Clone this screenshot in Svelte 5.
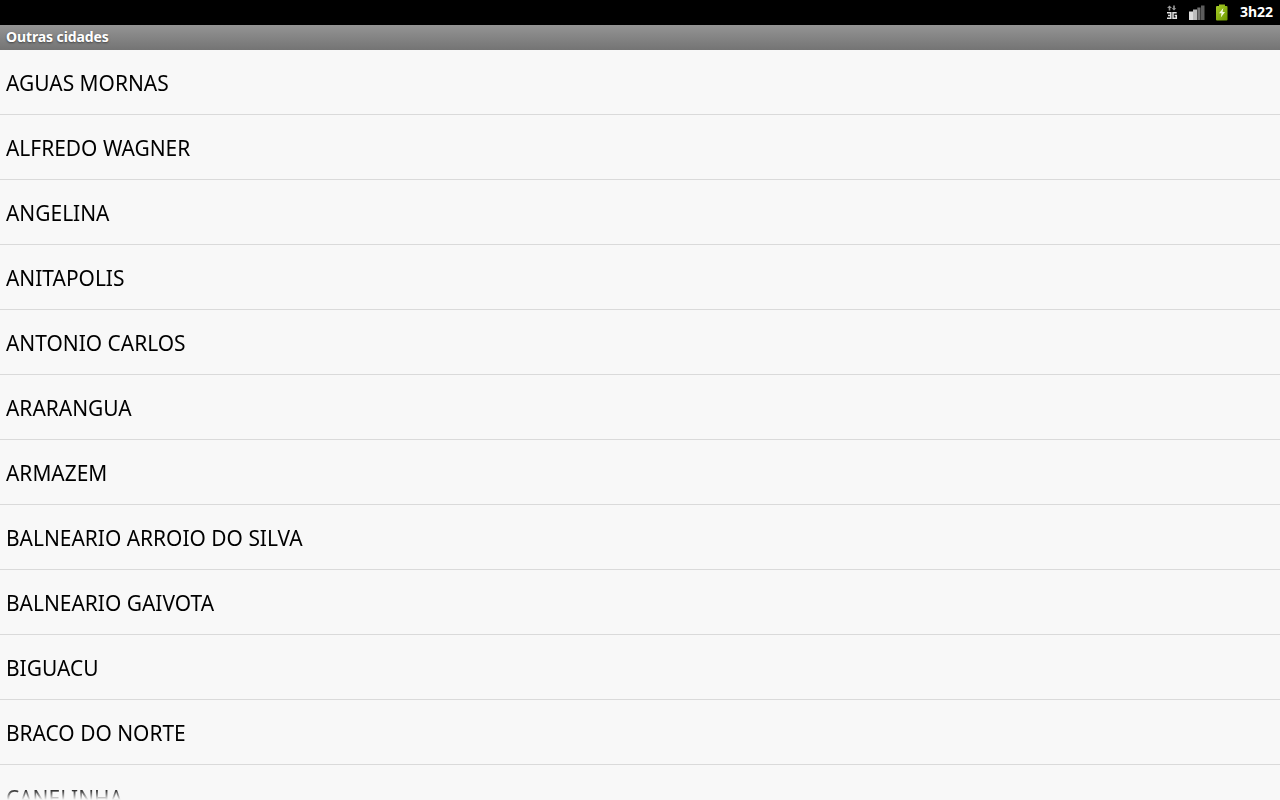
<script lang="ts">
	const cities: string[] = [
		'AGUAS MORNAS',
		'ALFREDO WAGNER',
		'ANGELINA',
		'ANITAPOLIS',
		'ANTONIO CARLOS',
		'ARARANGUA',
		'ARMAZEM',
		'BALNEARIO ARROIO DO SILVA',
		'BALNEARIO GAIVOTA',
		'BIGUACU',
		'BRACO DO NORTE',
		'CANELINHA'
	];
</script>

<div class="screen">
	<header class="status-bar">
		<svg class="icon-3g" width="12" height="16" viewBox="0 0 12 16">
			<path d="M3.500 1.500 6 4H4.300v2.500H2.700V4H1z" fill="#9a9a9a" />
			<path d="M8 6.500 5.700 4.200h1.500V1.500h1.600v2.700h1.500z" fill="#9a9a9a" />
			<path d="M1 8.700h3.800v5.600H1M2 11.500h3M10.700 8.700H7v5.600h3.300v-2.700H8.600" fill="none" stroke="#e2e2e2" stroke-width="1.500" />
		</svg>
		<svg class="icon-signal" width="17" height="15" viewBox="0 0 17 15">
			<path d="M0 6.500h4V15H0z" fill="#dedede" />
			<path d="M4 4.500h4V15H4z" fill="#bcbcbc" />
			<path d="M8.300 2.500h3.200V15H8.300z" fill="#737373" />
			<path d="M12 .5h3.500V15H12z" fill="#5c5c5c" />
		</svg>
		<svg class="icon-battery" width="12" height="17" viewBox="0 0 12 17">
			<defs>
				<linearGradient id="charge" x1="0" y1="0" x2="1" y2="1">
					<stop offset="0" stop-color="#a9ce28" />
					<stop offset="1" stop-color="#6d9900" />
				</linearGradient>
			</defs>
			<path d="M3 .5h6v1.500H10.500q1 0 1 1V15.500q0 1-1 1H1q-1 0-1-1V3q0-1 1-1h2z" fill="url(#charge)" />
			<path d="M7.300 4 3 9.300h2.500L4.800 13.500 9 8H6.600z" fill="#f3f9df" />
		</svg>
		<span class="clock">3h22</span>
	</header>
	<h1 class="title-bar">Outras cidades</h1>
	<ul class="city-list">
		{#each cities as city (city)}
			<li class="city-row"><span class="city-name">{city}</span></li>
		{/each}
	</ul>
</div>

<style>
	:global(body) {
		margin: 0;
		overflow: hidden;
	}

	.screen {
		display: flex;
		flex-direction: column;
		height: 100vh;
		overflow: hidden;
		background: #f8f8f8;
		font-family: 'Noto Sans', 'Open Sans', sans-serif;
	}

	.status-bar {
		display: flex;
		flex: 0 0 25px;
		align-items: center;
		justify-content: flex-end;
		padding-right: 7px;
		background: #000;
		color: #fff;
	}

	.icon-3g {
		margin: -1px 11px 0 0;
	}

	.icon-signal {
		margin: 0 10px 0 0;
	}

	.icon-battery {
		margin: -1px 12px 0 0;
	}

	.clock {
		font-size: 14px;
		font-weight: 700;
		line-height: 23px;
		height: 25px;
	}

	.title-bar {
		flex: 0 0 25px;
		box-sizing: border-box;
		margin: 0;
		padding-left: 6px;
		background: linear-gradient(#949494, #747474);
		color: #fff;
		font-size: 14px;
		font-weight: 700;
		letter-spacing: -0.1px;
		line-height: 24px;
		text-shadow: 0 1px 2px #444;
	}

	.city-list {
		flex: 1;
		min-height: 0;
		margin: 0;
		padding: 0;
		overflow: hidden;
		list-style: none;
		mask-image: linear-gradient(#000 calc(100% - 12px), transparent);
	}

	.city-row {
		box-sizing: border-box;
		height: 65px;
		padding-left: 6px;
		border-bottom: 1px solid #dadada;
		color: #000;
		font-size: 22px;
		line-height: 64px;
		white-space: nowrap;
	}

	/* slightly condensed capitals */
	.city-name {
		display: inline-block;
		transform: scaleX(0.951);
		transform-origin: left;
	}
</style>
